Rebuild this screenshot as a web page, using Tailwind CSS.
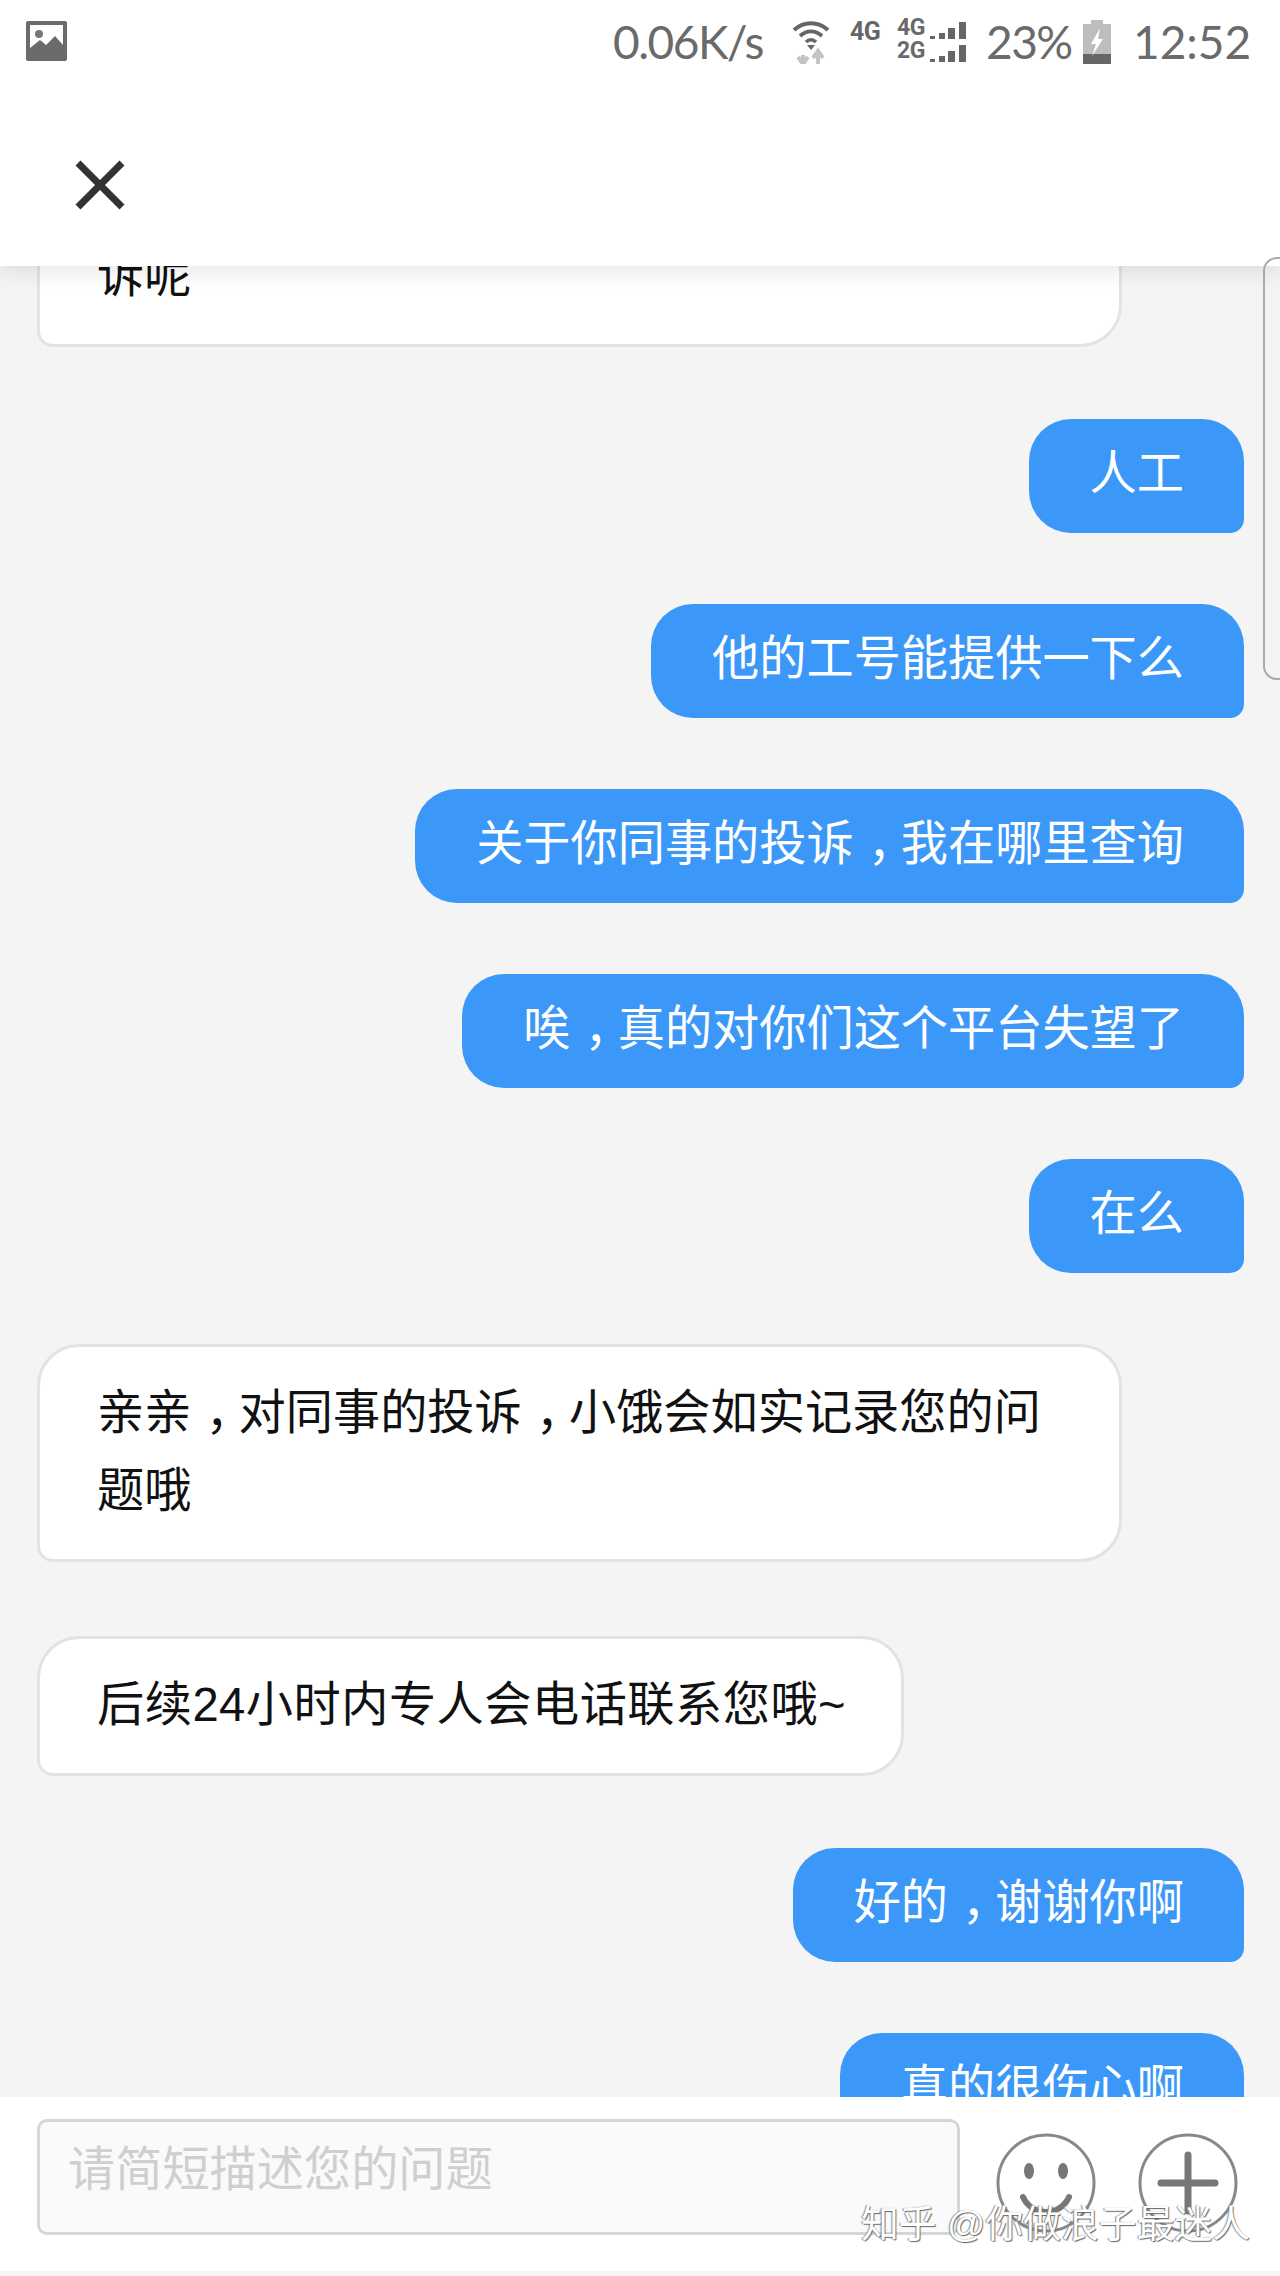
<!DOCTYPE html>
<html lang="zh-CN">
<head>
  <meta charset="UTF-8" />
  <meta name="viewport" content="width=device-width, initial-scale=1.0"/>
  <title>客服对话</title>
  <script src="https://cdn.jsdelivr.net/npm/@tailwindcss/browser@4"></script>
</head>
<body class="bg-white">
  <div class="relative w-[1280px] h-[2276px] overflow-hidden flex flex-col bg-[#f4f4f4] font-['Liberation_Sans','Noto_Sans_CJK_SC',sans-serif] text-[47.2px] leading-[78px]">

    <!-- Status bar and close button -->
    <header class="relative z-10 h-[266px] shrink-0 bg-white shadow-[0_4px_22px_rgba(0,0,0,0.11)]">
      <div class="h-[84px] pl-[26px] pr-[30px] flex items-center justify-between text-[#6a6a6a] font-['Lato',sans-serif] leading-none">
        <svg class="w-[41px] h-[40px] -mt-[2px]" viewBox="0 0 41 40">
          <rect width="41" height="40" rx="2" fill="#6b6b6b"/>
          <rect x="4" y="4" width="33" height="30" fill="#fff"/>
          <circle cx="13" cy="13" r="4" fill="#777"/>
          <path d="M4 27 L14 19 L20 24 L29 15 L37 24 V36 H4 Z" fill="#6b6b6b"/>
        </svg>
        <div class="flex items-center">
          <span class="text-[46px] tracking-[-1.5px] w-[179px]">0.06K/s</span>
          <svg class="w-[38px] h-[44px]" viewBox="0 0 38 44" fill="none">
            <path d="M2 10 C12 1 26 1 36 10" stroke="#666" stroke-width="4"/>
            <path d="M8 16 C15 10 23 10 30 16" stroke="#666" stroke-width="4"/>
            <path d="M14 22 C17 19 21 19 24 22" stroke="#666" stroke-width="3.5"/>
            <path d="M15 25 H23 L19 30 Z" fill="#666"/>
            <path d="M11 44 V35 M6 37 L11 44 L16 37" stroke="#c4c4c4" stroke-width="4"/>
            <path d="M26 44 V33 M21 38 L26 31 L31 38" stroke="#c4c4c4" stroke-width="4"/>
          </svg>
          <span class="ml-[20px] w-[47px] -mt-[22px] text-[25px] tracking-[-0.5px] font-bold text-[#666] font-['Roboto',sans-serif]">4G</span>
          <div class="flex flex-col gap-[6px] text-[23px] tracking-[-0.5px] font-bold font-['Roboto',sans-serif]">
            <div class="flex items-end h-[17px]">
              <span class="w-[33px]">4G</span>
              <svg class="w-[36px] h-[17px]" viewBox="0 0 36 17" fill="#666"><path d="M0 14h5v3H0zM9 11h6v6H9zM18 6h7v11h-7zM29 0h7v17h-7z"/></svg>
            </div>
            <div class="flex items-end h-[17px]">
              <span class="w-[33px]">2G</span>
              <svg class="w-[36px] h-[17px]" viewBox="0 0 36 17" fill="#666"><path d="M0 14h5v3H0zM9 11h6v6H9zM18 6h7v11h-7zM29 0h7v17h-7z"/></svg>
            </div>
          </div>
          <span class="ml-[20px] text-[46px] tracking-[-1.5px] w-[97px]">23%</span>
          <svg class="w-[28px] h-[44px]" viewBox="0 0 28 44">
            <path d="M8 0h12v4h8v40H0V4h8z" fill="#bdbdbd"/>
            <rect y="34" width="28" height="10" fill="#666"/>
            <path d="M17 8 L8 24 H13 L9 36 L20 19 H15 Z" fill="#fff"/>
          </svg>
          <span class="ml-[22px] text-[46px] w-[117px] whitespace-nowrap">12:52</span>
        </div>
      </div>
      <div class="h-[182px] pl-[75px] flex items-start pt-[76px]">
        <svg class="w-[50px] h-[50px]" viewBox="0 0 50 50" fill="none">
          <path d="M3 3 L47 47 M47 3 L3 47" stroke="#333" stroke-width="7"/>
        </svg>
      </div>
    </header>

    <!-- Conversation -->
    <main class="flex-1 min-h-0 overflow-hidden pl-[37px] pr-[36px] flex flex-col gap-[71px]">
      <div class="-mt-[58px] w-[1085px] mb-px shrink-0 bg-white border-[3px] border-[#e3e3e3] rounded-[42px] rounded-bl-[16px] pl-[57px] pr-[55px] pt-[26px] pb-[29px] text-[#111]">诉呢</div>

      <div class="self-end shrink-0 bg-[#3c98f8] text-white rounded-[42px] rounded-br-[14px] pl-[61px] pr-[60px] pt-[16px] pb-[20px]">人工</div>
      <div class="self-end shrink-0 bg-[#3c98f8] text-white rounded-[42px] rounded-br-[14px] pl-[61px] pr-[60px] pt-[16px] pb-[20px]">他的工号能提供一下么</div>
      <div class="self-end shrink-0 bg-[#3c98f8] text-white rounded-[42px] rounded-br-[14px] pl-[61px] pr-[60px] pt-[16px] pb-[20px]">关于你同事的投诉<span class="pl-[14px] tracking-[-14px]">，</span>我在哪里查询</div>
      <div class="self-end shrink-0 bg-[#3c98f8] text-white rounded-[42px] rounded-br-[14px] pl-[61px] pr-[60px] pt-[16px] pb-[20px]">唉<span class="pl-[14px] tracking-[-14px]">，</span>真的对你们这个平台失望了</div>
      <div class="self-end shrink-0 bg-[#3c98f8] text-white rounded-[42px] rounded-br-[14px] pl-[61px] pr-[60px] pt-[16px] pb-[20px]">在么</div>

      <div class="w-[1085px] mb-[3px] shrink-0 bg-white border-[3px] border-[#e3e3e3] rounded-[42px] rounded-bl-[16px] pl-[57px] pr-[55px] pt-[27px] pb-[29px] text-[#111]">亲亲<span class="pl-[14px] tracking-[-14px]">，</span>对同事的投诉<span class="pl-[14px] tracking-[-14px]">，</span>小饿会如实记录您的问题哦</div>
      <div class="self-start mb-px shrink-0 bg-white border-[3px] border-[#e3e3e3] rounded-[42px] rounded-bl-[16px] pl-[57px] pr-[55px] pt-[27px] pb-[29px] text-[#111] tracking-[0.5px]">后续24小时内专人会电话联系您哦~</div>

      <div class="self-end shrink-0 bg-[#3c98f8] text-white rounded-[42px] rounded-br-[14px] pl-[61px] pr-[60px] pt-[16px] pb-[20px]">好的<span class="pl-[14px] tracking-[-14px]">，</span>谢谢你啊</div>
      <div class="self-end shrink-0 bg-[#3c98f8] text-white rounded-[42px] rounded-br-[14px] pl-[61px] pr-[60px] pt-[16px] pb-[20px]">真的很伤心啊</div>
    </main>

    <!-- Input bar -->
    <footer class="relative z-10 h-[179px] shrink-0 bg-white border-b-[5px] border-[#f6f6f6] pl-[37px] pt-[22px] flex items-start">
      <div class="w-[923px] h-[116px] bg-[#fafafa] border-[3px] border-[#d6d6d6] rounded-[10px] pl-[28px] pt-[9px] text-[#cfcfcf]">请简短描述您的问题</div>
      <svg class="ml-[36px] mt-[14px] w-[100px] h-[100px]" viewBox="0 0 100 100" fill="none">
        <circle cx="50" cy="50" r="48" stroke="#888" stroke-width="3"/>
        <ellipse cx="33" cy="38" rx="5" ry="8" fill="#777"/>
        <ellipse cx="67" cy="38" rx="5" ry="8" fill="#777"/>
        <path d="M27 64 C36 84 64 84 73 64" stroke="#777" stroke-width="6" stroke-linecap="round"/>
      </svg>
      <svg class="ml-[42px] mt-[14px] w-[100px] h-[100px]" viewBox="0 0 100 100" fill="none">
        <circle cx="50" cy="50" r="48" stroke="#888" stroke-width="3"/>
        <path d="M50 22 V78 M23 50 H77" stroke="#777" stroke-width="7" stroke-linecap="round"/>
      </svg>
    </footer>

    <!-- Side handle and watermark -->
    <div class="absolute z-20 left-[1263px] top-[257px] w-[20px] h-[423px] border-2 border-r-0 border-[#aaa] rounded-l-[14px]"></div>
    <div class="absolute z-20 left-[861px] top-[2199px] text-[37.8px] leading-[50px] text-white [text-shadow:1px_1px_1px_#666,-1px_0_1px_#888] whitespace-nowrap">知乎 @你做浪子最迷人</div>
  </div>
</body>
</html>
